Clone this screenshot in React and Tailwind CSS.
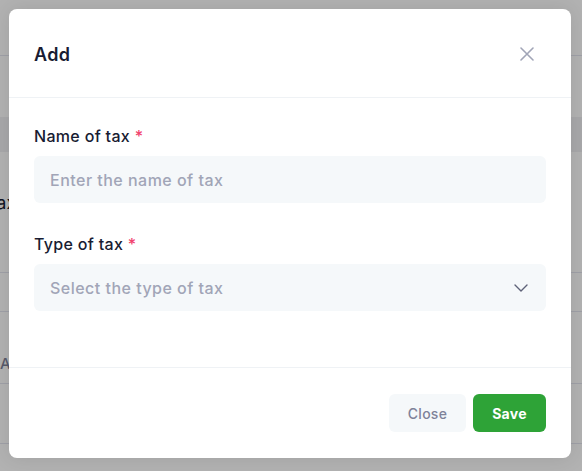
import { ChevronDown } from 'lucide-react';

function Field({ label, placeholder, select = false }) {
  return (
    <div>
      <label className="block mb-2 text-[16px] leading-[23px] tracking-[0.02em] font-medium text-[#181c32]">
        {label} <span className="text-[#f1416c]">*</span>
      </label>
      <div className="flex items-center h-[47px] rounded-md bg-[#f5f8fa] pl-4 pr-[13px]">
        <span className="flex-1 text-[16px] tracking-[0.03em] font-medium text-[#a1a5b7]">{placeholder}</span>
        {select && <ChevronDown className="w-6 h-6 text-[#5e6278]" strokeWidth={1.4} />}
      </div>
    </div>
  );
}

export default function App() {
  return (
    <div className="relative w-[582px] h-[471px] overflow-hidden bg-white font-['Inter',sans-serif]">

      {/* page behind the dialog */}
      <div className="flex flex-col">
        <div className="h-[56px] border-b border-[#e4e6ef]" />
        <div className="h-[61px]" />
        <div className="h-[35px] bg-[#f1f1f4]" />
        <div className="h-[121px] border-b border-[#e4e6ef] pt-[39px]">
          <span className="block -ml-[14px] text-[18px] leading-[24px] text-[#181c32]">Tax</span>
        </div>
        <div className="h-[39px] border-b border-[#e4e6ef]" />
        <div className="h-[72px] border-b border-[#e4e6ef] flex items-end pb-[8px]">
          <span className="text-[15px] font-medium text-[#7e8299]">A</span>
        </div>
        <div className="h-[60px] border-b border-[#e4e6ef]" />
      </div>

      {/* overlay + modal */}
      <div className="absolute inset-0 bg-black/30">
        <div className="ml-[9px] mt-[9px] w-[562px] rounded-lg bg-white shadow-[0_0_20px_rgba(0,0,0,0.1)]">

          <div className="flex items-center justify-between h-[89px] px-[25px] border-b border-[#eff2f5]">
            <h2 className="pt-[2px] text-[18px] tracking-[0.02em] font-semibold text-[#181c32]">Add</h2>
            <button type="button" className="mr-[12px] mt-[2px] text-[#a1a5b7]" aria-label="Close">
              <svg width="14" height="14" viewBox="0 0 14 14" fill="none" stroke="currentColor" strokeWidth="1.6" strokeLinecap="round">
                <path d="M1 1L13 13M13 1L1 13" />
              </svg>
            </button>
          </div>

          <div className="flex flex-col gap-[30px] px-[25px] pt-[27px] pb-[56px]">
            <Field label="Name of tax" placeholder="Enter the name of tax" />
            <Field label="Type of tax" placeholder="Select the type of tax" select />
          </div>

          <div className="flex justify-end gap-[7px] px-[25px] py-[26px] border-t border-[#eff2f5]">
            <button type="button" className="w-[77px] h-[38px] rounded-md bg-[#f5f8fa] text-[14px] tracking-[0.02em] font-medium text-[#7e8299]">
              Close
            </button>
            <button type="button" className="w-[73px] h-[38px] rounded-md bg-[#2ea337] text-[14px] tracking-[0.02em] font-bold text-white">
              Save
            </button>
          </div>

        </div>
      </div>
    </div>
  );
}
